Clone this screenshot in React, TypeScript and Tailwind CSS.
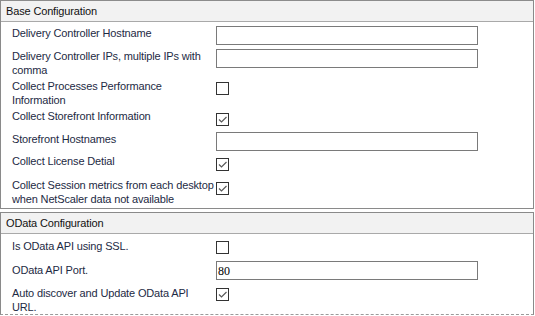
import React from "react";

const font = { fontFamily: '"Liberation Sans", Arial, sans-serif' };

function Check({ checked }: { checked?: boolean }) {
  return (
    <div className="w-[13px] h-[13px] border border-[#333333] bg-white">
      {checked && (
        <svg width="11" height="11" viewBox="0 0 11 11" className="block">
          <path d="M2 5.5 L4.5 8 L9.5 3" fill="none" stroke="#5a5a5a" strokeWidth="1.2" />
        </svg>
      )}
    </div>
  );
}

function Input({ value }: { value?: string }) {
  return (
    <div className="w-[262px] h-[19px] border border-[#7a7a7a] bg-white flex items-center pl-[1px]">
      {value && (
        <span
          className="text-[12px] text-black leading-none"
          style={{ fontFamily: '"Liberation Serif", "Times New Roman", serif' }}
        >
          {value}
        </span>
      )}
    </div>
  );
}

type RowProps = {
  h: string;
  lmt: string;
  cmt: string;
  lines: string[];
  control: React.ReactNode;
};

function Row({ h, lmt, cmt, lines, control }: RowProps) {
  return (
    <div className={`flex ${h}`}>
      <div className={`w-[215px] pl-[11px] ${lmt} text-[11px] leading-[14px] text-[#1d2a44] tracking-[-0.15px]`}>
        {lines.map((l, i) => (
          <div key={i} className="whitespace-nowrap">
            {l}
          </div>
        ))}
      </div>
      <div className={cmt}>{control}</div>
    </div>
  );
}

function Header({ title }: { title: string }) {
  return (
    <div className="h-[21px] bg-[#f2f2f2] border-b border-[#a9a9a9] pl-[5px] flex items-center text-[11px] text-[#111111] tracking-[-0.15px]">
      {title}
    </div>
  );
}

export default function App() {
  return (
    <div className="w-[535px] h-[316px] bg-white" style={font}>
      <div className="w-[534px] border border-[#8a8a8a] border-t-[#8c8c8c]">
        <Header title="Base Configuration" />
        <Row h="h-[25px]" lmt="mt-[4px]" cmt="mt-[4px]" lines={["Delivery Controller Hostname"]} control={<Input />} />
        <Row
          h="h-[30px]"
          lmt="mt-[2px]"
          cmt="mt-[2px]"
          lines={["Delivery Controller IPs, multiple IPs with", "comma"]}
          control={<Input />}
        />
        <Row
          h="h-[30px]"
          lmt="mt-[2px]"
          cmt="mt-[5px]"
          lines={["Collect Processes Performance", "Information"]}
          control={<Check />}
        />
        <Row h="h-[23px]" lmt="mt-[2px]" cmt="mt-[6px]" lines={["Collect Storefront Information"]} control={<Check checked />} />
        <Row h="h-[23px]" lmt="mt-[2px]" cmt="mt-[2px]" lines={["Storefront Hostnames"]} control={<Input />} />
        <Row h="h-[23px]" lmt="mt-[1px]" cmt="mt-[5px]" lines={["Collect License Detial"]} control={<Check checked />} />
        <Row
          h="h-[32px]"
          lmt="mt-[2px]"
          cmt="mt-[6px]"
          lines={["Collect Session metrics from each desktop", "when NetScaler data not available"]}
          control={<Check checked />}
        />
      </div>
      <div className="h-[3px]" />
      <div className="w-[534px] border border-[#8a8a8a] border-b-[#9a9a9a] border-b-dashed" style={{ borderBottomStyle: "dashed" }}>
        <Header title="OData Configuration" />
        <Row h="h-[24px]" lmt="mt-[5px]" cmt="mt-[7px]" lines={["Is OData API using SSL."]} control={<Check />} />
        <Row h="h-[24px]" lmt="mt-[5px]" cmt="mt-[3px]" lines={["OData API Port."]} control={<Input value="80" />} />
        <Row
          h="h-[32px]"
          lmt="mt-[4px]"
          cmt="mt-[6px]"
          lines={["Auto discover and Update OData API", "URL."]}
          control={<Check checked />}
        />
      </div>
    </div>
  );
}
